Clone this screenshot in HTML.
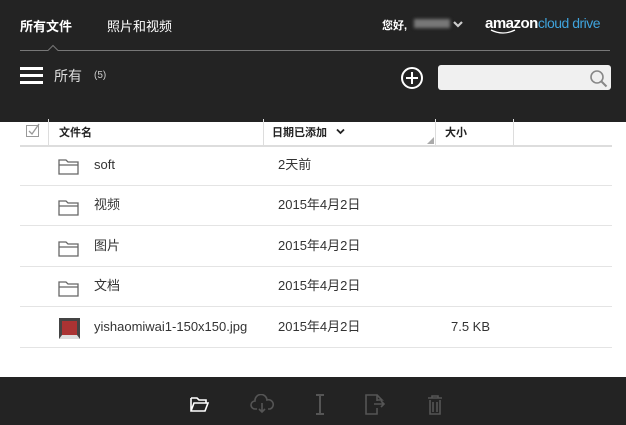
<!DOCTYPE html>
<html><head><meta charset="utf-8"><style>
*{margin:0;padding:0;box-sizing:border-box}
body{width:626px;height:425px;background:#fff;font-family:"Liberation Sans","Noto Sans CJK SC",sans-serif;position:relative;overflow:hidden}
.top{position:absolute;left:0;top:0;width:626px;height:122px;background:#232323}
.t{position:absolute;color:#fff;font-size:13px;font-weight:bold}
.row{position:absolute;left:20px;width:592px;height:41px;border-bottom:1px solid #e4e4e4;font-size:13px;color:#333}
.row span{position:absolute;top:0;line-height:40px;height:40px}
.foot{position:absolute;left:0;top:377px;width:626px;height:48px;background:#232323}
</style></head><body>
<div class="top">
 <div class="t" style="left:20px;top:16px">所有文件</div>
 <div class="t" style="left:107px;top:16px;font-weight:normal">照片和视频</div>
 <div class="t" style="left:382px;top:17px;font-size:11px">您好,</div>
 <div style="position:absolute;left:414px;top:19px;width:36px;height:9px;background:#777;filter:blur(1.5px)"></div>
 <svg style="position:absolute;left:452px;top:20px" width="12" height="9"><path d="M2 2l4 4 4-4" stroke="#ccc" stroke-width="2.2" fill="none"/></svg>
 <div style="position:absolute;left:485px;top:15px;font-size:15px;color:#fff;font-weight:bold;letter-spacing:-0.5px">amazon<span style="color:#3fa3dc;font-weight:normal;font-size:14px">cloud drive</span></div>
 <svg style="position:absolute;left:490px;top:28px" width="30" height="8"><path d="M1 2q12 6 24 0" stroke="#fff" stroke-width="1.3" fill="none"/></svg>
 <svg style="position:absolute;left:20px;top:40px" width="590" height="12"><path d="M0 10.5H28L33 5.5L38 10.5H590" stroke="#777" stroke-width="1" fill="none"/></svg>
 <div style="position:absolute;left:20px;top:67px;width:23px;height:3px;background:#fff;box-shadow:0 7px 0 #fff,0 14px 0 #fff"></div>
 <div style="position:absolute;left:54px;top:66px;color:#ddd;font-size:14px">所有</div>
 <div style="position:absolute;left:94px;top:70px;color:#ccc;font-size:10px">(5)</div>
 <svg style="position:absolute;left:400px;top:66px" width="24" height="24"><circle cx="12" cy="12" r="10" stroke="#fff" stroke-width="2" fill="none"/><path d="M12 6v12M6 12h12" stroke="#fff" stroke-width="2"/></svg>
 <div style="position:absolute;left:438px;top:65px;width:173px;height:25px;background:#f0f0f0;border-radius:3px"></div>
 <svg style="position:absolute;left:589px;top:69px" width="20" height="20"><circle cx="8" cy="8" r="6" stroke="#888" stroke-width="1.6" fill="none"/><path d="M12.5 12.5l5 5" stroke="#888" stroke-width="2"/></svg>
</div>
<div style="position:absolute;left:20px;top:145px;width:592px;height:2px;background:#ddd"></div>
<svg style="position:absolute;left:25px;top:122px" width="18" height="18"><rect x="1.5" y="3.5" width="12" height="11" stroke="#999" fill="none"/><path d="M4 9l3 3 7-10" stroke="#999" stroke-width="1.3" fill="none"/></svg>
<div style="position:absolute;left:48px;top:119px;width:1px;height:26px;background:#ddd"></div>
<div style="position:absolute;left:263px;top:119px;width:1px;height:26px;background:#ddd"></div>
<div style="position:absolute;left:435px;top:119px;width:1px;height:26px;background:#ddd"></div>
<div style="position:absolute;left:513px;top:119px;width:1px;height:26px;background:#ddd"></div>
<div style="position:absolute;left:59px;top:124px;font-size:11px;font-weight:bold;color:#222">文件名</div>
<div style="position:absolute;left:272px;top:124px;font-size:11px;font-weight:bold;color:#222">日期已添加</div>
<svg style="position:absolute;left:336px;top:128px" width="9" height="7"><path d="M1 1.5l3.5 3.5 3.5-3.5" stroke="#222" stroke-width="1.8" fill="none"/></svg>
<svg style="position:absolute;left:427px;top:137px" width="7" height="7"><path d="M7 0V7H0z" fill="#aaa"/></svg>
<div style="position:absolute;left:445px;top:124px;font-size:11px;font-weight:bold;color:#222">大小</div>
<div class="row" style="top:145px"><svg style="position:absolute;left:38px;top:12px" width="22" height="18"><path d="M1 3h7l2 2h10v12H1z M1 8h19" stroke="#666" stroke-width="1.3" fill="none"/></svg><span style="left:74px">soft</span><span style="left:258px">2天前</span></div>
<div class="row" style="top:185px"><svg style="position:absolute;left:38px;top:13px" width="22" height="18"><path d="M1 3h7l2 2h10v12H1z M1 8h19" stroke="#666" stroke-width="1.3" fill="none"/></svg><span style="left:74px">视频</span><span style="left:258px">2015年4月2日</span></div>
<div class="row" style="top:226px"><svg style="position:absolute;left:38px;top:13px" width="22" height="18"><path d="M1 3h7l2 2h10v12H1z M1 8h19" stroke="#666" stroke-width="1.3" fill="none"/></svg><span style="left:74px">图片</span><span style="left:258px">2015年4月2日</span></div>
<div class="row" style="top:266px"><svg style="position:absolute;left:38px;top:13px" width="22" height="18"><path d="M1 3h7l2 2h10v12H1z M1 8h19" stroke="#666" stroke-width="1.3" fill="none"/></svg><span style="left:74px">文档</span><span style="left:258px">2015年4月2日</span></div>
<div class="row" style="top:307px"><div style="position:absolute;left:39px;top:11px;width:21px;height:21px;background:#a33;border:3px solid #444;border-bottom:4px solid #ddd"></div><span style="left:74px">yishaomiwai1-150x150.jpg</span><span style="left:258px">2015年4月2日</span><span style="left:431px">7.5 KB</span></div>
<div class="foot">
 <svg style="position:absolute;left:189px;top:19px" width="22" height="18"><path d="M2 2h6l2 2h7v3M2 2v13h14l3-8H5l-3 8" stroke="#fff" stroke-width="1.6" fill="none"/></svg>
 <svg style="position:absolute;left:249px;top:17px" width="28" height="20"><path d="M8 15H6a4 4 0 010-8 6 6 0 0112-1 4.5 4.5 0 013 9h-2M13 9v9M10 15l3 3 3-3" stroke="#555" stroke-width="1.6" fill="none"/></svg>
 <svg style="position:absolute;left:313px;top:17px" width="14" height="22"><path d="M3 1h8M7 1v19M3 20h8" stroke="#555" stroke-width="2" fill="none"/></svg>
 <svg style="position:absolute;left:364px;top:17px" width="26" height="22"><path d="M13 7V1H2v19h11v-6M13 1l5 5h-5M10 10h10M17 7l3 3-3 3" stroke="#555" stroke-width="1.6" fill="none"/></svg>
 <svg style="position:absolute;left:426px;top:17px" width="18" height="22"><path d="M2 4h14M6 4V2h6v2M4 6v14h10V6M7 8v10M11 8v10" stroke="#555" stroke-width="1.6" fill="none"/></svg>
</div>
</body></html>
